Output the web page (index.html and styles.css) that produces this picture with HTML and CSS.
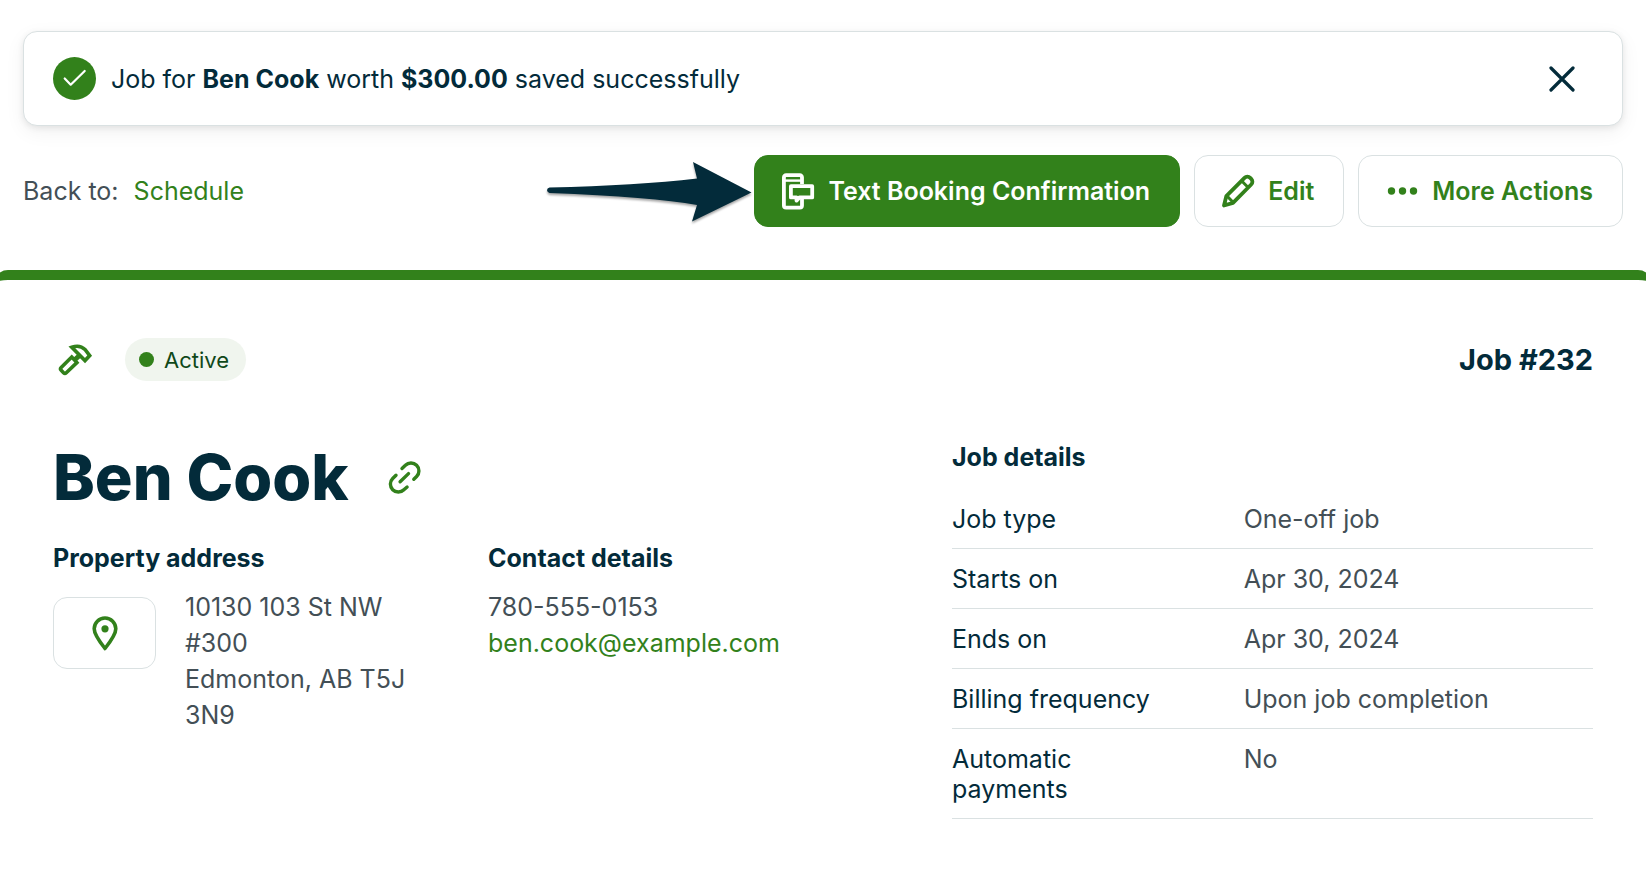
FILE: index.html
```html
<!DOCTYPE html>
<html lang="en">
<head>
<meta charset="utf-8">
<meta name="viewport" content="width=device-width, initial-scale=1">
<title>Job #232 – Ben Cook</title>
<link rel="stylesheet" href="styles.css">
</head>
<body>
<div class="top">
  <div class="alert" role="status">
    <svg class="alert-icon" viewBox="0 0 43 43" aria-hidden="true"><circle cx="21.5" cy="21.5" r="21.5" fill="#32811b"/><path d="M11.7 21.5l6 6.2L31.7 14" fill="none" stroke="#fff" stroke-width="2.2" stroke-linecap="round" stroke-linejoin="round"/></svg>
    <p class="alert-text">Job for <strong>Ben Cook</strong> worth <strong>$300.00</strong> saved successfully</p>
    <button class="close" type="button" aria-label="Dismiss">
      <svg class="close-icon" viewBox="0 0 26 26" aria-hidden="true"><path d="M2 2l22 22M24 2L2 24" fill="none" stroke="#032b3a" stroke-width="3.2" stroke-linecap="round"/></svg>
    </button>
  </div>
  <div class="toolbar">
    <nav class="back" aria-label="Breadcrumb">Back to: <a class="link" href="#">Schedule</a></nav>
    <svg class="arrow" viewBox="0 0 205 60" aria-hidden="true"><path d="M2.500 25.500Q90 23.500 150 16.500L146 0L204.500 30.500L145 59.500L150 43Q105 35 2.500 31Q0 30 0 28.300Q0 26 2.500 25.500Z" fill="#032b3a"/></svg>
    <div class="actions">
      <button class="btn btn-primary" type="button">
        <svg class="btn-icon" viewBox="0 0 34 38" aria-hidden="true"><g fill="none" stroke="#fff" stroke-width="3.800" stroke-linejoin="round"><path d="M21 12V5.400a2.200 2.200 0 0 0-2.200-2.200H5.100A2.200 2.200 0 0 0 2.900 5.400v28a2.200 2.200 0 0 0 2.200 2.200h13.700a2.200 2.200 0 0 0 2.200-2.200V27"/><path d="M4 8.600h16" stroke-width="2.400"/><path d="M9.900 14.200h21.300v11.200H18.500l-3 3.200v-3.200H9.900z"/></g></svg>
        Text Booking Confirmation
      </button>
      <button class="btn" type="button">
        <svg class="btn-icon" viewBox="0 0 34 38" aria-hidden="true"><g fill="none" stroke="#32811b" stroke-width="3.800" stroke-linejoin="round"><path d="M3 33.500l2.300-9.300L23.500 5.800a4 4 0 0 1 5.700 0l1 1a4 4 0 0 1 0 5.700L12 30.900z"/><path d="M20.500 8.800l6.700 6.700M6 24l6.300 6.500" stroke-width="3"/></g></svg>
        Edit
      </button>
      <button class="btn" type="button">
        <svg class="btn-icon" viewBox="0 0 34 38" aria-hidden="true"><g fill="#32811b"><circle cx="6.500" cy="19" r="3.700"/><circle cx="17.500" cy="19" r="3.700"/><circle cx="28.500" cy="19" r="3.700"/></g></svg>
        More Actions
      </button>
    </div>
  </div>
</div>
<main class="card">
  <div class="card-head">
    <svg class="hammer" viewBox="0 0 43 43" aria-hidden="true"><g fill="none" stroke="#32811b" stroke-width="3.600" stroke-linejoin="miter"><path d="M18.800 9.200Q27 6.500 32 11.500L36.700 17.600L32 22.600Z"/><path d="M18.700 19l5.200 5.600L13.300 34.700a2 2 0 0 1-2.800 0l-2.300-2.400a2 2 0 0 1 0-2.800z"/><path d="M21.500 22l5-4.500" stroke-width="5"/></g></svg>
    <span class="badge"><span class="dot"></span>Active</span>
    <span class="job-number">Job #232</span>
  </div>
  <div class="content">
    <div class="client">
      <div class="title-row">
        <h1 class="title">Ben Cook</h1>
        <a class="title-link" href="#" aria-label="Open client">
          <svg class="link-icon" viewBox="0 0 34 34" aria-hidden="true"><g fill="none" stroke="#32811b" stroke-width="3.400" stroke-linecap="round"><path d="M15 8.500l3.400-3.200a7.900 7.900 0 0 1 11.200 11.200l-2.800 2.800"/><path d="M9 15.200l-3.300 3.300a7.900 7.900 0 0 0 11.200 11.200l3.200-2.700"/><path d="M13.100 21.700l8.400-8.100"/></g></svg>
        </a>
      </div>
      <div class="columns">
        <section class="column">
          <h2 class="heading">Property address</h2>
          <div class="address-row">
            <button class="map-button" type="button" aria-label="Show on map">
              <svg class="pin" viewBox="0 0 26 35" aria-hidden="true"><path d="M13 32.500C7 25 2.200 18.500 2.200 12.800a10.800 10.800 0 0 1 21.600 0C23.800 18.500 19 25 13 32.500z" fill="none" stroke="#32811b" stroke-width="3.600" stroke-linejoin="round"/><circle cx="13" cy="12.800" r="3.600" fill="#32811b"/></svg>
            </button>
            <address class="text">10130 103 St NW #300<br>Edmonton, AB T5J 3N9</address>
          </div>
        </section>
        <section class="column">
          <h2 class="heading">Contact details</h2>
          <p class="text">780-555-0153<br><a class="link" href="#">ben.cook@example.com</a></p>
        </section>
      </div>
    </div>
    <section class="details">
      <h2 class="heading">Job details</h2>
      <table class="table">
        <tr><th scope="row">Job type</th><td>One-off job</td></tr>
        <tr><th scope="row">Starts on</th><td>Apr 30, 2024</td></tr>
        <tr><th scope="row">Ends on</th><td>Apr 30, 2024</td></tr>
        <tr><th scope="row">Billing frequency</th><td>Upon job completion</td></tr>
        <tr><th scope="row">Automatic payments</th><td>No</td></tr>
      </table>
    </section>
  </div>
</main>
</body>
</html>
```
FILE: styles.css
```css
* { box-sizing: border-box; }
body {
  margin: 0;
  overflow-x: hidden;
  background: #fff;
  color: #032b3a;
  font: 400 25px/36px Inter, "Liberation Sans", sans-serif;
}
h1, h2, p { margin: 0; }
svg { display: block; flex: none; }
button { font: inherit; cursor: pointer; }
.link { color: #32811b; text-decoration: none; }

.top { padding: 31px 23px 43px; }
.alert {
  display: flex;
  align-items: center;
  gap: 15px;
  min-height: 95px;
  padding: 0 42px 0 29px;
  border: 1px solid #dae1e2;
  border-radius: 14px;
  background: #fff;
  box-shadow: 0 2px 6px rgba(0, 0, 0, .08), 0 6px 20px rgba(0, 0, 0, .06);
}
.alert-icon { width: 43px; height: 43px; }
.alert-text { flex: 1; }
.close { padding: 5px; border: 0; background: none; }
.close-icon { width: 26px; height: 26px; }

.toolbar {
  display: flex;
  align-items: center;
  margin-top: 29px;
}
.back { color: #434f56; }
.back .link { margin-left: 8px; }
.arrow {
  width: 205px;
  height: 60px;
  margin: 2px 2px 0 auto;
  filter: drop-shadow(0 2px 1px rgba(0, 0, 0, .35));
}
.actions { display: flex; gap: 14px; }
.btn {
  display: flex;
  align-items: center;
  gap: 13px;
  min-height: 72px;
  padding: 0 29px 0 26px;
  border: 1px solid #dae1e2;
  border-radius: 14px;
  background: #fff;
  color: #32811b;
  font-weight: 600;
}
.btn-primary { border-color: #32811b; background: #32811b; color: #fff; }
.btn-icon { width: 34px; height: 38px; }

.card {
  margin: 0 -6px;
  padding: 58px;
  border: 1px solid #dae1e2;
  border-top: 10px solid #32811b;
  border-bottom: 0;
  border-radius: 14px 14px 0 0;
}
.card-head { display: flex; align-items: center; }
.hammer { width: 43px; height: 43px; }
.badge {
  display: flex;
  align-items: center;
  gap: 10px;
  height: 43px;
  margin-left: 29px;
  padding: 0 17px 0 14px;
  border-radius: 22px;
  background: #f0f5ee;
  color: #0f4819;
  font-size: 22px;
}
.dot { width: 15px; height: 15px; border-radius: 50%; background: #32811b; }
.job-number { margin-left: auto; font-size: 29px; font-weight: 700; }

.content {
  display: grid;
  grid-template-columns: 899fr 641fr;
  margin-top: 58px;
}
.title-row { display: flex; align-items: center; gap: 38px; margin-top: 2px; }
.title { font-size: 63px; font-weight: 800; line-height: 72px; }
.link-icon { width: 34px; height: 34px; }
.heading { font-size: 25px; font-weight: 700; line-height: 36px; }
.columns {
  display: grid;
  grid-template-columns: 435fr 464fr;
  margin-top: 27px;
}
.column .heading { margin-bottom: 13px; }
.text { color: #434f56; font-style: normal; }
.address-row { display: flex; gap: 29px; padding-right: 46px; }
.map-button {
  display: flex;
  flex: none;
  align-items: center;
  justify-content: center;
  width: 103px;
  height: 72px;
  margin-top: 8px;
  border: 1px solid #dae1e2;
  border-radius: 14px;
  background: #fff;
}
.pin { width: 26px; height: 35px; }

.table {
  width: 100%;
  margin-top: 14px;
  border-collapse: collapse;
  line-height: 30px;
}
.table th, .table td {
  padding: 15px 0 14px;
  border-bottom: 1px solid #dae1e2;
  text-align: left;
  vertical-align: top;
  font-weight: 400;
}
.table th { width: 45.5%; padding-right: 80px; }
.table td { color: #434f56; }
```
